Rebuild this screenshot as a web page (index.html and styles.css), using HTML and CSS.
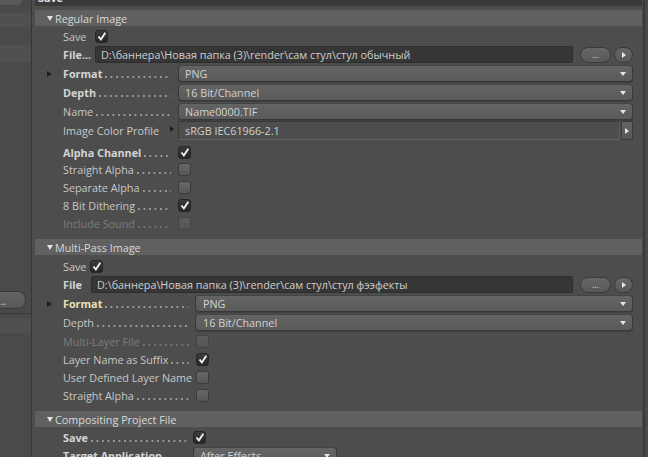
FILE: index.html
```html
<!DOCTYPE html>
<html>
<head>
<meta charset="utf-8">
<link rel="stylesheet" href="styles.css">
</head>
<body>
<div class="app">
  <aside class="side">
    <div class="side-top"></div>
    <div class="side-band b1"></div>
    <div class="side-band b2"></div>
    <div class="side-btn">...</div>
    <div class="side-line"></div>
    <div class="side-band b3"></div>
  </aside>
  <main class="main">
    <div class="topbar"><span>Save</span></div>

    <section class="group">
      <div class="ghead"><span class="tri-down"></span>Regular Image</div>
      <div class="row h17 mt2"><span class="gut"></span><span class="lbl w32">Save</span><span class="cb on"><svg viewBox="0 0 12 12"><path d="M1.8 6.6 L3.7 5.4 L5.1 7.7 L9.3 1.3 L11 2.4 L5.4 10.8 Z"/></svg></span></div>
      <div class="row h19"><span class="gut"></span><span class="lbl w32 b">File...</span><span class="path">D:\баннера\Новая папка (3)\render\сам стул\стул обычный</span><span class="btn-dots">...</span><span class="btn-arrow"><i class="tri-w"></i></span></div>
      <div class="row h19"><span class="gut"><i class="tri-right"></i></span><span class="lbl w115 b">Format<span class="dots"></span></span><span class="dd"><span class="ddt">PNG</span><i class="caret"></i></span></div>
      <div class="row h19"><span class="gut"></span><span class="lbl w115 b">Depth<span class="dots"></span></span><span class="dd"><span class="ddt">16 Bit/Channel</span><i class="caret"></i></span></div>
      <div class="row h19"><span class="gut"></span><span class="lbl w115">Name<span class="dots"></span></span><span class="dd"><span class="ddt">Name0000.TIF</span><i class="caret"></i></span></div>
      <div class="row h19"><span class="gut"></span><span class="lbl w115">Image Color Profile<span class="fill"></span><i class="tri-small"></i></span><span class="profile">sRGB IEC61966-2.1</span><span class="btn-side"><i class="tri-w"></i></span></div>
      <div class="row h18 mt3"><span class="gut"></span><span class="lbl w115 b">Alpha Channel<span class="dots"></span></span><span class="cb on"><svg viewBox="0 0 12 12"><path d="M1.8 6.6 L3.7 5.4 L5.1 7.7 L9.3 1.3 L11 2.4 L5.4 10.8 Z"/></svg></span></div>
      <div class="row h17"><span class="gut"></span><span class="lbl w115">Straight Alpha<span class="dots"></span></span><span class="cb"></span></div>
      <div class="row h18"><span class="gut"></span><span class="lbl w115">Separate Alpha<span class="dots"></span></span><span class="cb"></span></div>
      <div class="row h18"><span class="gut"></span><span class="lbl w115">8 Bit Dithering<span class="dots"></span></span><span class="cb on"><svg viewBox="0 0 12 12"><path d="M1.8 6.6 L3.7 5.4 L5.1 7.7 L9.3 1.3 L11 2.4 L5.4 10.8 Z"/></svg></span></div>
      <div class="row h18"><span class="gut"></span><span class="lbl w115 off">Include Sound<span class="dots"></span></span><span class="cb dis"></span></div>
    </section>

    <section class="group mt7">
      <div class="ghead"><span class="tri-down"></span>Multi-Pass Image</div>
      <div class="row h18 mt2"><span class="gut"></span><span class="lbl w27">Save</span><span class="cb on"><svg viewBox="0 0 12 12"><path d="M1.8 6.6 L3.7 5.4 L5.1 7.7 L9.3 1.3 L11 2.4 L5.4 10.8 Z"/></svg></span></div>
      <div class="row h19"><span class="gut"></span><span class="lbl w28 b">File</span><span class="path">D:\баннера\Новая папка (3)\render\сам стул\стул фээфекты</span><span class="btn-dots">...</span><span class="btn-arrow"><i class="tri-w"></i></span></div>
      <div class="row h19"><span class="gut"><i class="tri-right"></i></span><span class="lbl w132 b hl">Format<span class="dots"></span></span><span class="dd wide"><span class="ddt">PNG</span><i class="caret"></i></span></div>
      <div class="row h19"><span class="gut"></span><span class="lbl w132">Depth<span class="dots"></span></span><span class="dd wide"><span class="ddt">16 Bit/Channel</span><i class="caret"></i></span></div>
      <div class="row h18"><span class="gut"></span><span class="lbl w133 off">Multi-Layer File<span class="dots"></span></span><span class="cb dis"></span></div>
      <div class="row h18"><span class="gut"></span><span class="lbl w133">Layer Name as Suffix<span class="dots"></span></span><span class="cb on"><svg viewBox="0 0 12 12"><path d="M1.8 6.6 L3.7 5.4 L5.1 7.7 L9.3 1.3 L11 2.4 L5.4 10.8 Z"/></svg></span></div>
      <div class="row h19"><span class="gut"></span><span class="lbl w133 tight">User Defined Layer Name</span><span class="cb"></span></div>
      <div class="row h17"><span class="gut"></span><span class="lbl w133">Straight Alpha<span class="dots"></span></span><span class="cb"></span></div>
    </section>

    <section class="group mt7">
      <div class="ghead"><span class="tri-down"></span>Compositing Project File</div>
      <div class="row h18 mt1"><span class="gut"></span><span class="lbl w130 b">Save<span class="dots"></span></span><span class="cb on"><svg viewBox="0 0 12 12"><path d="M1.8 6.6 L3.7 5.4 L5.1 7.7 L9.3 1.3 L11 2.4 L5.4 10.8 Z"/></svg></span></div>
      <div class="row h19"><span class="gut"></span><span class="lbl w130 b">Target Application<span class="dots"></span></span><span class="dd short"><span class="ddt">After Effects</span><i class="caret"></i></span></div>
    </section>
  </main>
  <div class="edge"></div>
</div>
</body>
</html>
```

FILE: styles.css
```css
* { box-sizing: border-box; }
html, body { margin: 0; padding: 0; }
body {
  width: 648px;
  height: 457px;
  overflow: hidden;
  background: #4d4d4d;
  font-family: "Open Sans", "Liberation Sans", sans-serif;
  font-size: 10.8px;
  color: #c8c8c8;
}
.app { display: flex; height: 457px; }

/* left side panel */
.side {
  width: 32px;
  flex: none;
  background: #4a4a4a;
  border-right: 1px solid #363636;
  display: flex;
  flex-direction: column;
}
.side-top { width: 22px; height: 5px; background: #5a5a5a; border-radius: 0 0 5px 0; flex: none; }
.side-band { background: #505050; flex: none; }
.b1 { margin-top: 8px; height: 14px; }
.b2 { margin-top: 18px; height: 17px; }
.side-btn {
  margin-top: 229px;
  width: 26px;
  height: 18px;
  flex: none;
  background: linear-gradient(#636363, #585858);
  border: 1px solid #393939;
  border-left: none;
  border-radius: 0 8px 8px 0;
  color: #d8d8d8;
  font-size: 10px;
  line-height: 18px;
  text-indent: -2px;
  overflow: hidden;
}
.side-line { margin-top: 4px; height: 1px; background: #3b3b3b; flex: none; }
.b3 { margin-top: 4px; height: 15px; }

/* main */
.main {
  flex: 1;
  min-width: 0;
  border-right: 2px solid #393939;
  padding: 0 1px 0 3px;
  overflow: hidden;
}
.edge { width: 3px; flex: none; background: #4a4a4a; }
.topbar { height: 6px; background: #3a3a3a; overflow: hidden; padding-left: 3px; }
.topbar span { display: block; font-weight: bold; color: #e2e2e2; line-height: 14px; margin-top: -9px; }

.group { display: flex; flex-direction: column; }
.ghead {
  margin-top: 4px;
  height: 16px;
  background: #606060;
  display: flex;
  align-items: center;
  padding-left: 12px;
  color: #d8d8d8;
}
.group.mt7 .ghead { margin-top: 0; }
.tri-down {
  width: 0; height: 0;
  border-left: 3.5px solid transparent;
  border-right: 3.5px solid transparent;
  border-top: 5px solid #e2e2e2;
  margin-right: 2px;
}
.mt1 { margin-top: 1px; }
.mt2 { margin-top: 2px; }
.mt3 { margin-top: 3px; }
.mt7 { margin-top: 7px; }
.h17 { height: 17px; }
.h18 { height: 18px; }
.h19 { height: 19px; }

.row { display: flex; align-items: center; padding: 0 9px 0 12px; flex: none; }
.gut { width: 16px; flex: none; display: flex; align-items: center; }
.tri-right {
  width: 0; height: 0;
  border-top: 3.5px solid transparent;
  border-bottom: 3.5px solid transparent;
  border-left: 5px solid #1e1e1e;
}
.lbl {
  flex: none;
  display: flex;
  align-items: baseline;
  white-space: nowrap;
  overflow: hidden;
  padding-right: 7px;
}
.lbl.tight { padding-right: 4px; }
.lbl.b { font-weight: bold; color: #d4d4d4; }
.lbl.hl { color: #e6e0b4; }
.lbl.off { color: #7c7c7c; }
.dots {
  flex: 1;
  min-width: 0;
  height: 2px;
  margin-left: 3px;
  background-image: radial-gradient(circle at 1px 1px, #9a9a9a 0.75px, transparent 1.1px);
  background-size: 5.5px 2px;
  background-repeat: repeat-x;
  background-position: left bottom;
}
.lbl.off .dots { background-image: radial-gradient(circle at 1px 1px, #727272 0.75px, transparent 1.1px); }
.fill { flex: 1; }
.tri-small {
  align-self: center;
  width: 0; height: 0;
  border-top: 3px solid transparent;
  border-bottom: 3px solid transparent;
  border-left: 4px solid #1e1e1e;
  margin-right: -3px;
  margin-top: -4px;
}
.w27 { width: 27px; }
.w28 { width: 28px; }
.w32 { width: 32px; }
.w115 { width: 115px; }
.w130 { width: 130px; }
.w132 { width: 132px; }
.w133 { width: 133px; }

/* checkbox */
.cb {
  width: 13px; height: 13px;
  flex: none;
  border: 1px solid #3b3b3b;
  border-radius: 3px;
  background: linear-gradient(#686868, #575757);
  display: flex;
  align-items: center;
  justify-content: center;
}
.cb.dis { background: linear-gradient(#5e5e5e, #535353); border-color: #444; }
.cb.on { background: linear-gradient(#3c3c3c, #252525); border-color: #262626; }
.cb svg { width: 11px; height: 11px; display: block; }
.cb svg path { fill: #f0f0f0; }

/* path field */
.path {
  flex: 1;
  min-width: 0;
  height: 17px;
  background: #363636;
  border: 1px solid #2d2d2d;
  border-radius: 2px;
  padding-left: 5px;
  color: #cfcfcf;
  line-height: 15px;
  white-space: nowrap;
  overflow: hidden;
}
.btn-dots {
  flex: none;
  margin-left: 7px;
  width: 31px;
  height: 16px;
  border: 1px solid #3a3a3a;
  background: linear-gradient(#666666, #585858);
  border-radius: 8px;
  color: #dcdcdc;
  font-size: 9px;
  line-height: 14px;
  text-align: center;
}
.btn-arrow {
  flex: none;
  margin-left: 3px;
  width: 19px;
  height: 16px;
  border: 1px solid #3a3a3a;
  background: linear-gradient(#666666, #585858);
  border-radius: 8px;
  display: flex;
  align-items: center;
  justify-content: center;
}
.tri-w {
  width: 0; height: 0;
  border-top: 3px solid transparent;
  border-bottom: 3px solid transparent;
  border-left: 4px solid #e6e6e6;
  margin-left: 1px;
}

/* dropdown */
.dd {
  flex: 1;
  min-width: 0;
  height: 17px;
  border: 1px solid #383838;
  border-top-color: #444;
  background: linear-gradient(#646464, #5a5a5a);
  border-radius: 4px;
  padding: 0 6px;
  display: flex;
  align-items: center;
  justify-content: space-between;
  color: #d2d2d2;
  white-space: nowrap;
  box-shadow: 0 1px 0 #404040;
}
.ddt { flex: none; }
.dd.wide { padding-left: 7px; }
.dd.short { flex: none; width: 144px; }
.caret {
  flex: none;
  width: 0; height: 0;
  border-left: 3.5px solid transparent;
  border-right: 3.5px solid transparent;
  border-top: 4px solid #e6e6e6;
}

/* image color profile */
.profile {
  flex: 1;
  min-width: 0;
  height: 19px;
  border: 1px solid #3a3a3a;
  border-bottom-color: #606060;
  border-right-color: #5a5a5a;
  background: #4e4e4e;
  padding-left: 6px;
  line-height: 17px;
  color: #d0d0d0;
  white-space: nowrap;
}
.btn-side {
  flex: none;
  margin-left: 1px;
  width: 12px;
  height: 19px;
  border: 1px solid #3a3a3a;
  border-radius: 2px;
  background: linear-gradient(#646464, #575757);
  display: flex;
  align-items: center;
  justify-content: center;
}
.btn-side .tri-w { margin-left: 0; }
```
